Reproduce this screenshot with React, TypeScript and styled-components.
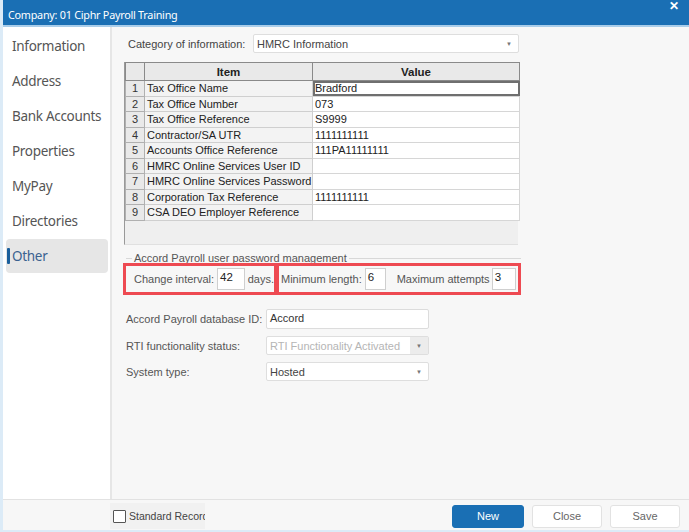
import React from "react";
import styled, { createGlobalStyle } from "styled-components";

const Global = createGlobalStyle`
  html, body { margin: 0; padding: 0; background: #ffffff; }
  * { box-sizing: border-box; }
`;

const Window = styled.div`
  width: 689px;
  height: 532px;
  display: flex;
  flex-direction: column;
  background: #f7f7f7;
  border-left: 3px solid #dcebf7;
  border-bottom: 2px solid #dcebf7;
  overflow: hidden;
`;

const TitleBar = styled.div`
  height: 27px;
  flex: none;
  margin-left: -3px;
  background: #1a6fb4;
  border-bottom: 2px solid #a9cdea;
  display: flex;
  align-items: center;
  justify-content: space-between;
  padding: 0 10px 0 8px;
  color: #ffffff;
  font-family: "Noto Sans", sans-serif;
  font-size: 10.8px;
  letter-spacing: -0.25px;
`;

const Title = styled.span`
  margin-top: 3px;
`;

const CloseX = styled.span`
  font-family: "Liberation Sans", sans-serif;
  font-weight: bold;
  font-size: 12px;
  margin-top: -14px;
`;

const Body = styled.div`
  flex: 1;
  display: flex;
  min-height: 0;
  border-bottom: 1px solid #e2e2e2;
`;

const Sidebar = styled.nav`
  width: 109px;
  flex: none;
  background: #ffffff;
  border-right: 2px solid #e6e6e6;
  padding: 2px 2px 0 3px;
  display: flex;
  flex-direction: column;
  gap: 1px;
`;

const NavItem = styled.div<{ $active?: boolean }>`
  position: relative;
  height: 34px;
  display: flex;
  align-items: center;
  padding-left: 6px;
  border-radius: 4px;
  font-family: "Noto Sans", sans-serif;
  font-size: 13.5px;
  letter-spacing: -0.3px;
  color: ${(p) => (p.$active ? "#3a6290" : "#555555")};
  background: ${(p) => (p.$active ? "#e6e6e6" : "transparent")};
  &::before {
    content: "";
    display: ${(p) => (p.$active ? "block" : "none")};
    position: absolute;
    left: 1px;
    top: 9px;
    width: 3px;
    height: 16px;
    background: #1a5f9c;
    border-radius: 1px;
  }
`;

const Main = styled.main`
  flex: 1;
  padding: 7px 0 0 12px;
  font-family: "Liberation Sans", Arial, sans-serif;
  font-size: 11px;
  color: #555;
`;

const CategoryRow = styled.div`
  display: flex;
  align-items: center;
  height: 19px;
  padding-left: 4px;
`;

const CatLabel = styled.span`
  width: 125px;
  color: #444;
`;

const SelectBox = styled.div<{ $w: number; $disabled?: boolean }>`
  width: ${(p) => p.$w}px;
  height: 19px;
  background: #ffffff;
  border: 1px solid #dedede;
  border-radius: 2px;
  display: flex;
  align-items: center;
  justify-content: space-between;
  padding-left: 3px;
  color: ${(p) => (p.$disabled ? "#b5b5b5" : "#444")};
`;

const Arrow = styled.span<{ $boxed?: boolean }>`
  width: 18px;
  height: 100%;
  display: flex;
  align-items: center;
  justify-content: center;
  font-size: 6px;
  color: #777;
  background: ${(p) => (p.$boxed ? "#ececec" : "transparent")};
`;

const TableWrap = styled.div`
  margin-top: 9px;
  width: 394px;
  height: 183px;
  background: #efefef;
  border-left: 1px solid #999;
  border-bottom: 1px solid #e0e0e0;
`;

const Grid = styled.table`
  border-collapse: collapse;
  width: 394px;
  table-layout: fixed;
  color: #222;
  font-size: 11px;
`;

const Th = styled.th<{ $w: number }>`
  width: ${(p) => p.$w}px;
  height: 18px;
  background: #e9e9e9;
  border: 1px solid #8a8a8a;
  font-weight: bold;
  font-size: 11.5px;
  text-align: center;
  padding: 0;
`;

const Tr = styled.tr`
  height: 15.5px;
`;

const NumCell = styled.td`
  background: #e9e9e9;
  border: 1px solid #b0b0b0;
  text-align: center;
  padding: 0;
  color: #333;
`;

const ItemCell = styled.td`
  background: #f3f3f3;
  border: 1px solid #cfcfcf;
  padding: 0 0 0 2px;
  white-space: nowrap;
  overflow: hidden;
`;

const ValueCell = styled.td<{ $selected?: boolean }>`
  background: #ffffff;
  border: 1px solid #d6d6d6;
  ${(p) => (p.$selected ? "outline: 2px solid #6f6f6f; outline-offset: -2px;" : "")}
  padding: 0 0 0 2px;
  white-space: nowrap;
`;

const Fieldset = styled.fieldset`
  margin: 7px 0 0 2px;
  width: 392px;
  border: none;
  border-top: 1px solid #d8d8d8;
  padding: 0;
`;

const Legend = styled.legend`
  padding: 0 2px;
  margin-left: 6px;
  color: #555;
  font-size: 11px;
`;

const HighlightRow = styled.div`
  display: flex;
  margin: -1px 0 0 -3px;
`;

const Highlight = styled.div<{ $w: number }>`
  width: ${(p) => p.$w}px;
  height: 32px;
  border: 3px solid #ee4a52;
  display: flex;
  align-items: center;
  padding-left: 8px;
  gap: 3px;
  & + & {
    margin-left: -1px;
    padding-left: 2px;
  }
`;

const SmallInput = styled.div<{ $w: number; $ml?: number }>`
  width: ${(p) => p.$w}px;
  height: 22px;
  margin-left: ${(p) => p.$ml ?? 0}px;
  background: #ffffff;
  border: 1px solid #cfcfcf;
  color: #222;
  font-size: 11.5px;
  padding: 2px 0 0 2px;
`;

const FieldLabel = styled.span<{ $ml?: number }>`
  margin-left: ${(p) => p.$ml ?? 0}px;
  color: #555;
  white-space: nowrap;
`;

const Form = styled.div`
  margin-top: 14px;
  margin-left: 2px;
  display: grid;
  grid-template-columns: 140px 163px;
  row-gap: 7px;
  align-items: center;
`;

const TextInput = styled.div`
  height: 20px;
  background: #ffffff;
  border: 1px solid #dcdcdc;
  border-radius: 2px;
  padding: 2px 0 0 3px;
  color: #333;
`;

const Footer = styled.footer`
  height: 30px;
  flex: none;
  display: flex;
  align-items: center;
  padding-left: 107px;
  padding-top: 2px;
  font-family: "Liberation Sans", Arial, sans-serif;
  font-size: 10.5px;
`;

const CheckGroup = styled.label`
  width: 95px;
  height: 26px;
  display: flex;
  align-items: center;
  gap: 3px;
  overflow: hidden;
  white-space: nowrap;
  color: #444;
  background: #f1f1f1;
`;

const Check = styled.span`
  width: 13px;
  height: 13px;
  margin-left: 3px;
  flex: none;
  border: 1px solid #555;
  background: #fff;
  border-radius: 1px;
`;

const Buttons = styled.div`
  margin-left: auto;
  margin-right: 9px;
  display: flex;
  gap: 8px;
`;

const Button = styled.button<{ $primary?: boolean }>`
  width: ${(p) => (p.$primary ? 72 : 70)}px;
  height: 23px;
  border-radius: 3px;
  font-family: "Liberation Sans", Arial, sans-serif;
  font-size: 11px;
  border: 1px solid ${(p) => (p.$primary ? "#1a6fb4" : "#e2e2e2")};
  background: ${(p) => (p.$primary ? "#1a6fb4" : "#ffffff")};
  color: ${(p) => (p.$primary ? "#ffffff" : "#666")};
`;

const navItems = [
  "Information",
  "Address",
  "Bank Accounts",
  "Properties",
  "MyPay",
  "Directories",
  "Other",
];

const rows: [string, string][] = [
  ["Tax Office Name", "Bradford"],
  ["Tax Office Number", "073"],
  ["Tax Office Reference", "S9999"],
  ["Contractor/SA UTR", "1111111111"],
  ["Accounts Office Reference", "111PA11111111"],
  ["HMRC Online Services User ID", ""],
  ["HMRC Online Services Password", ""],
  ["Corporation Tax Reference", "1111111111"],
  ["CSA DEO Employer Reference", ""],
];

export default function App() {
  return (
    <>
      <Global />
      <Window>
        <TitleBar>
          <Title>Company: 01 Ciphr Payroll Training</Title>
          <CloseX>✕</CloseX>
        </TitleBar>
        <Body>
          <Sidebar>
            {navItems.map((n) => (
              <NavItem key={n} $active={n === "Other"}>
                {n}
              </NavItem>
            ))}
          </Sidebar>
          <Main>
            <CategoryRow>
              <CatLabel>Category of information:</CatLabel>
              <SelectBox $w={266}>
                HMRC Information
                <Arrow>▼</Arrow>
              </SelectBox>
            </CategoryRow>
            <TableWrap>
              <Grid>
                <thead>
                  <tr>
                    <Th $w={19}></Th>
                    <Th $w={168}>Item</Th>
                    <Th $w={207}>Value</Th>
                  </tr>
                </thead>
                <tbody>
                  {rows.map(([item, value], i) => (
                    <Tr key={item}>
                      <NumCell>{i + 1}</NumCell>
                      <ItemCell>{item}</ItemCell>
                      <ValueCell $selected={i === 0}>{value}</ValueCell>
                    </Tr>
                  ))}
                </tbody>
              </Grid>
            </TableWrap>
            <Fieldset>
              <Legend>Accord Payroll user password management</Legend>
              <HighlightRow>
                <Highlight $w={154}>
                  <FieldLabel>Change interval:</FieldLabel>
                  <SmallInput $w={31}>42</SmallInput>
                  <FieldLabel>days.</FieldLabel>
                </Highlight>
                <Highlight $w={245}>
                  <FieldLabel>Minimum length:</FieldLabel>
                  <SmallInput $w={21}>6</SmallInput>
                  <FieldLabel $ml={8}>Maximum attempts</FieldLabel>
                  <SmallInput $w={24} $ml={-1}>3</SmallInput>
                </Highlight>
              </HighlightRow>
            </Fieldset>
            <Form>
              <FieldLabel>Accord Payroll database ID:</FieldLabel>
              <TextInput>Accord</TextInput>
              <FieldLabel>RTI functionality status:</FieldLabel>
              <SelectBox $w={163} $disabled>
                RTI Functionality Activated
                <Arrow $boxed>▼</Arrow>
              </SelectBox>
              <FieldLabel>System type:</FieldLabel>
              <SelectBox $w={163}>
                Hosted
                <Arrow>▼</Arrow>
              </SelectBox>
            </Form>
          </Main>
        </Body>
        <Footer>
          <CheckGroup>
            <Check />
            Standard Record
          </CheckGroup>
          <Buttons>
            <Button $primary>New</Button>
            <Button>Close</Button>
            <Button>Save</Button>
          </Buttons>
        </Footer>
      </Window>
    </>
  );
}
